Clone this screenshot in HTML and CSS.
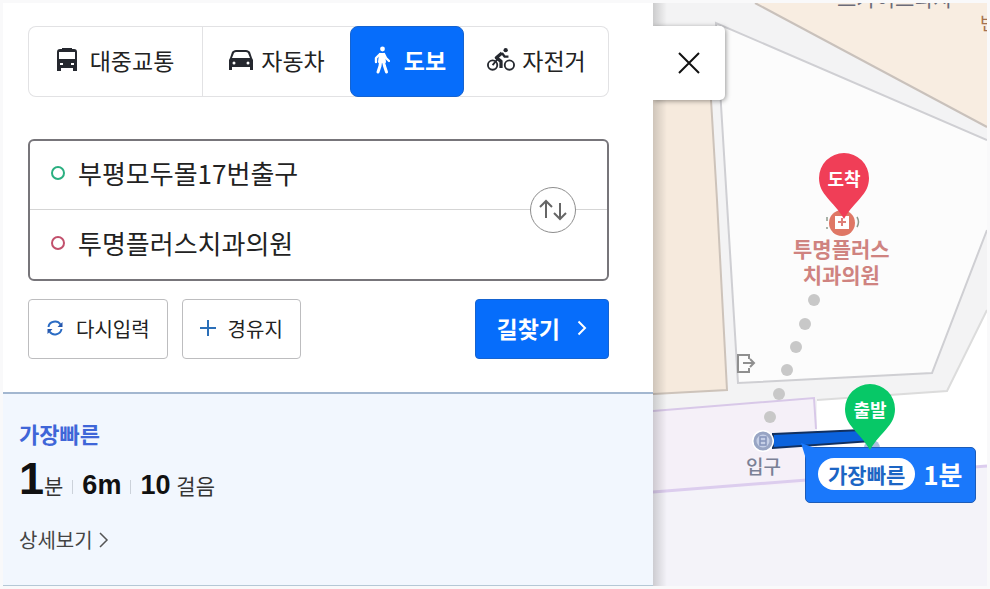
FILE: index.html
```html
<!DOCTYPE html>
<html lang="ko">
<head>
    <meta charset="UTF-8">
    <meta name="viewport" content="width=device-width, initial-scale=1.0">
    <title>길찾기</title>
    <link rel="stylesheet" href="styles.css">
</head>
<body>
    <div class="app">
        <main class="panel">
            <form class="search">
                <!-- Travel mode -->
                <div class="tabs">
                    <button type="button" class="tab">
                        <svg width="22" height="24" viewBox="0 0 22 24">
                            <path d="M6 0h10v1h2c2 0 3 1 3 3v19h-4v-3H5v3H1V4c0-2 1-3 3-3h2z" fill="#25282f"/>
                            <path d="M3 4h16v7H3z" fill="#fff"/>
                            <path d="M4 15h3v2H4zM15 15h3v2h-3z" fill="#fff"/>
                        </svg>
                        대중교통
                    </button>
                    <button type="button" class="tab">
                        <svg width="26" height="22" viewBox="0 0 26 22">
                            <path d="M8 1h10c2 0 3 1 4 2l2 6 1 2v10h-3v-3H4v3H1V11l1-2 2-6c1-1 2-2 4-2z" fill="#25282f"/>
                            <path d="M8 3h10c1 0 2 1 2 1l2 5H4l2-5s1-1 2-1z" fill="#fff"/>
                            <circle cx="6" cy="14" r="1.5" fill="#fff"/>
                            <circle cx="20" cy="14" r="1.5" fill="#fff"/>
                        </svg>
                        자동차
                    </button>
                    <button type="button" class="tab active">
                        <svg width="16" height="28" viewBox="0 0 16 28" fill="none" stroke="#fff" stroke-linecap="round" stroke-linejoin="round">
                            <circle cx="8.5" cy="3" r="2.4" fill="#fff" stroke="none"/>
                            <path d="M6 8h4l1 8H5z" fill="#fff" stroke-width="2"/>
                            <path d="M6 8l-4 4v4M10 8l2 4 3 3" stroke-width="2.4"/>
                            <path d="M6.5 16L6 20l-2 6M9.5 16l1 4 2 6" stroke-width="3"/>
                        </svg>
                        도보
                    </button>
                    <button type="button" class="tab">
                        <svg width="28" height="25" viewBox="0 0 30 26" fill="none" stroke="#25282f" stroke-width="2">
                            <circle cx="6" cy="19" r="5"/>
                            <circle cx="24" cy="19" r="5"/>
                            <circle cx="20" cy="3" r="2.3" fill="#25282f" stroke="none"/>
                            <path d="M16 6l-6 5 5 4v7" stroke-width="3.5" stroke-linejoin="round"/>
                            <path d="M16 6l3 4h4" stroke-width="2.5" stroke-linejoin="round"/>
                            <path d="M6 19l5-6"/>
                        </svg>
                        자전거
                    </button>
                </div>

                <!-- Start and goal -->
                <div class="route">
                    <label class="stop start">
                        <span class="ring"></span>
                        <input type="text" value="부평모두몰17번출구" aria-label="출발지">
                    </label>
                    <label class="stop goal">
                        <span class="ring"></span>
                        <input type="text" value="투명플러스치과의원" aria-label="도착지">
                    </label>
                    <button type="button" class="swap" aria-label="출발지 도착지 바꾸기">
                        <svg width="28" height="22" viewBox="0 0 28 22" fill="none" stroke="#666" stroke-width="2">
                            <path d="M7 19V2M1 8l6-6 6 6M21 4v16M15 14l6 6 6-6"/>
                        </svg>
                    </button>
                </div>

                <div class="actions">
                    <button type="reset" class="btn">
                        <svg width="18" height="16" viewBox="0 0 18 16" fill="none" stroke="#2b6cc4" stroke-width="2">
                            <path d="M2.5 7A6.5 6 0 0 1 14.5 4.5M15.5 9A6.5 6 0 0 1 3.5 11.5"/>
                            <path d="M16.5 2v5h-5zM1.5 14V9h5z" fill="#2456ad" stroke="none"/>
                        </svg>
                        다시입력
                    </button>
                    <button type="button" class="btn">
                        <svg width="16" height="16" viewBox="0 0 16 16" stroke="#2b6fb8" stroke-width="2">
                            <path d="M8 0v16M0 8h16"/>
                        </svg>
                        경유지
                    </button>
                    <button type="submit" class="btn primary">
                        길찾기
                        <svg width="10" height="16" viewBox="0 0 10 16" fill="none" stroke="#fff" stroke-width="2">
                            <path d="M1.5 1.5L8 8l-6.5 6.5"/>
                        </svg>
                    </button>
                </div>
            </form>

            <!-- Result -->
            <section class="result">
                <h2>가장빠른</h2>
                <p class="summary">
                    <span><b class="time">1</b>분</span>
                    <span><b>6m</b></span>
                    <span><b>10</b> 걸음</span>
                </p>
                <a href="#" class="detail">
                    상세보기
                    <svg width="10" height="16" viewBox="0 0 10 16" fill="none" stroke="#555" stroke-width="1.5">
                        <path d="M1 1l7 7-7 7"/>
                    </svg>
                </a>
            </section>
        </main>

        <div class="map">
            <svg class="ground" width="100%" height="100%">
                <!-- blocks -->
                <path d="M102 0L334 124V0z" fill="#f8ede1"/>
                <path d="M102 0L334 124" stroke="#c9c1bb" stroke-width="2"/>
                <path d="M334 137V227L279 370L85 380L63 20z" fill="#fcfcfc"/>
                <path d="M334 227L279 370L85 380L63 20L334 137" fill="none" stroke="#cfcfd3" stroke-width="2"/>
                <path d="M-2 80H57L64 197L74 387L-2 391z" fill="#f6eadd" stroke="#cdc3ba" stroke-width="2"/>
                <path d="M334 307L294 388L164 397V480L334 463z" fill="#fff"/>
                <path d="M334 307L294 388L164 397" fill="none" stroke="#dcdcdc" stroke-width="2"/>
                <!-- underground mall -->
                <path d="M0 408L161 395L166 476L334 463V583H0z" fill="#f4f3f9"/>
                <path d="M0 408L161 395L163 480L0 489z" fill="#f5f0f8"/>
                <path d="M0 408L161 395L163 426" fill="none" stroke="#d8c8e8" stroke-width="2"/>
                <path d="M0 489L334 463" stroke="#dccdee" stroke-width="3"/>
                <!-- walking route -->
                <g fill="#c8c8c8">
                    <circle cx="161" cy="297" r="6"/>
                    <circle cx="152" cy="321" r="6"/>
                    <circle cx="143" cy="344" r="6"/>
                    <circle cx="134" cy="367" r="6"/>
                    <circle cx="126" cy="391" r="6"/>
                    <circle cx="117" cy="414" r="6"/>
                </g>
                <circle cx="219" cy="445" r="8" fill="#a9bfdd"/>
                <path d="M120 431L209 427L220 438L120 445z" fill="#0b62dc" stroke="#12305f" stroke-width="2"/>
                <!-- mall entrance -->
                <circle cx="110" cy="438" r="11" fill="#fff"/>
                <circle cx="110" cy="438" r="8" fill="#c5cfe6" stroke="#98a5c4" stroke-width="3"/>
                <path d="M107 434h6v8h-6zM107 438h6" fill="none" stroke="#8494ba" stroke-width="1.5"/>
                <!-- exit -->
                <path d="M96 356v-4H85v17h11v-4M90 360h11M97 356l4 4-4 4" fill="none" stroke="#8f8f8f" stroke-width="2"/>
                <!-- clinic -->
                <circle cx="189" cy="220" r="13" fill="#df7765"/>
                <path d="M182 213h14v13h-14z" fill="#fff"/>
                <path d="M189 215v8M185 219h8" stroke="#df7f78" stroke-width="2"/>
                <path d="M174 214v4M174 224v2M204 214q3 5 0 10" fill="none" stroke="#8d9a8d" stroke-width="1.5"/>
            </svg>

            <span class="place mart">스카이프라자</span>
            <span class="place shop">번</span>
            <span class="place clinic">투명플러스<br>치과의원</span>
            <span class="place gate">입구</span>

            <div class="pin arrive">
                <svg width="50" height="66" viewBox="0 0 50 66"><path d="M25 0A25 25 0 0 1 50 25C50 42 36 47 25 66C14 47 0 42 0 25A25 25 0 0 1 25 0z"/></svg>
                <span>도착</span>
            </div>

            <div class="bubble">
                <svg class="tail" width="14" height="22" viewBox="0 0 14 22"><path d="M0 0L14 5V22L5 16z"/></svg>
                <em>가장빠른</em>
                <strong>1분</strong>
            </div>

            <div class="pin depart">
                <svg width="50" height="66" viewBox="0 0 50 66"><path d="M25 0A25 25 0 0 1 50 25C50 42 36 47 25 66C14 47 0 42 0 25A25 25 0 0 1 25 0z"/></svg>
                <span>출발</span>
            </div>

            <button type="button" class="close" aria-label="닫기">
                <svg width="22" height="22" viewBox="0 0 22 22" stroke="#111" stroke-width="2">
                    <path d="M1 1l20 20M21 1L1 21"/>
                </svg>
            </button>
        </div>
    </div>
</body>
</html>
```
FILE: styles.css
```css
* {
    margin: 0;
    padding: 0;
    box-sizing: border-box;
}

body {
    padding: 3px;
    background-color: #f9f9fa;
    color: #222;
    font-family: "Noto Sans CJK KR", sans-serif;
}

button,
input {
    font: inherit;
    color: inherit;
    background: none;
    border: none;
}

button {
    cursor: pointer;
}

svg {
    flex: none;
}

.app {
    display: flex;
    min-height: calc(100vh - 6px);
    background-color: #fff;
}

.panel {
    flex: 0 1 650px;
    display: flex;
    flex-direction: column;
}

.search {
    padding: 23px 44px 33px 25px;
}

/* Travel mode */
.tabs {
    display: grid;
    grid-template-columns: 175fr 147fr 114fr 145fr;
    height: 71px;
    margin-bottom: 42px;
    border-radius: 8px;
    box-shadow: inset 0 0 0 1px #e2e2e4;
}

.tab {
    display: flex;
    justify-content: center;
    align-items: center;
    gap: 7px;
    padding-bottom: 4px;
    font-size: 23px;
    line-height: 32px;
}

.tab:first-child {
    gap: 12px;
    border-right: 1px solid #e2e2e4;
}

.tab.active {
    gap: 14px;
    padding-left: 6px;
    background-color: #066dfb;
    border: 1px solid #1563d0;
    border-radius: 8px;
    color: #fff;
    font-weight: 700;
}

/* Start and goal */
.route {
    position: relative;
    margin-bottom: 18px;
    border: 2px solid #77757a;
    border-radius: 6px;
}

.stop {
    display: flex;
    align-items: center;
    gap: 13px;
    height: 69px;
    padding: 0 80px 4px 21px;
}

.stop.start {
    border-bottom: 1px solid #d5d5d5;
}

.ring {
    flex: none;
    width: 14px;
    height: 14px;
    border: 2px solid #2aaf80;
    border-radius: 50%;
}

.goal .ring {
    border-color: #c2506c;
}

.stop input {
    flex: 1;
    min-width: 0;
    font-size: 26px;
    line-height: 40px;
    outline: none;
}

.swap {
    position: absolute;
    top: 50%;
    right: 31px;
    display: flex;
    justify-content: center;
    align-items: center;
    width: 46px;
    height: 46px;
    transform: translateY(-50%);
    background-color: #fff;
    border: 1px solid #8d8d8d;
    border-radius: 50%;
}

.actions {
    display: flex;
    gap: 14px;
}

.btn {
    display: flex;
    align-items: center;
    gap: 12px;
    height: 60px;
    padding: 0 17px 2px;
    border: 1px solid #bdbdbf;
    border-radius: 4px;
    font-size: 20px;
}

.btn.primary {
    gap: 17px;
    margin-left: auto;
    padding: 0 21px 2px;
    background-color: #066dfb;
    border-color: #1563d0;
    color: #fff;
    font-size: 23px;
    font-weight: 700;
}

/* Result */
.result {
    flex: 1;
    padding: 23px 16px;
    background-color: #f2f7fe;
    border-top: 2px solid #a3b7d0;
    border-bottom: 1px solid #b5c8d6;
}

.result h2 {
    color: #3f66d8;
    font-size: 22px;
    font-weight: 700;
    line-height: 32px;
}

.summary {
    display: flex;
    align-items: baseline;
    color: #333;
    font-size: 21px;
    line-height: 60px;
}

.summary span + span::before {
    content: "";
    display: inline-block;
    width: 1px;
    height: 14px;
    margin: 0 9px;
    background-color: #ccd2da;
}

.summary b {
    color: #111;
    font-family: "Liberation Sans", sans-serif;
    font-size: 27px;
}

.summary .time {
    font-size: 45px;
}

.detail {
    display: inline-flex;
    align-items: center;
    gap: 6px;
    margin-top: 10px;
    color: #444;
    font-size: 20px;
    line-height: 30px;
    text-decoration: none;
}

/* Map */
.map {
    position: relative;
    flex: 1;
    overflow: hidden;
    background-color: #f3f3f4;
}

.map::after {
    content: "";
    position: absolute;
    inset: 0 auto 0 0;
    width: 14px;
    background: linear-gradient(to right, rgba(0, 0, 0, 0.16), rgba(0, 0, 0, 0));
}

.ground {
    position: absolute;
    inset: 0;
}

.place {
    position: absolute;
    line-height: 26px;
    text-align: center;
    white-space: nowrap;
}

.mart {
    top: -19px;
    left: 184px;
    color: #6b6b78;
    font-size: 21px;
}

.shop {
    top: 6px;
    left: 327px;
    color: #a5714e;
    font-size: 18px;
}

.clinic {
    top: 232px;
    left: 140px;
    color: #cf8380;
    font-size: 21px;
    font-weight: 700;
}

.gate {
    top: 450px;
    left: 93px;
    color: #7b8096;
    font-size: 19px;
    font-weight: 500;
}

.pin {
    position: absolute;
    width: 50px;
}

.pin svg {
    display: block;
}

.pin span {
    position: absolute;
    top: 12px;
    left: 0;
    width: 100%;
    color: #fff;
    font-size: 18px;
    font-weight: 700;
    line-height: 26px;
    text-align: center;
}

.arrive {
    top: 150px;
    left: 166px;
    fill: #f03e57;
}

.depart {
    top: 381px;
    left: 192px;
    fill: #07c867;
}

.bubble {
    position: absolute;
    top: 444px;
    left: 152px;
    display: flex;
    align-items: center;
    gap: 8px;
    height: 56px;
    padding: 0 12px 2px;
    background-color: #1a78fb;
    border: 1px solid #1d5cb8;
    border-radius: 5px;
    color: #fff;
    white-space: nowrap;
}

.bubble em {
    padding: 0 10px;
    background-color: #fff;
    border-radius: 16px;
    color: #1c65c4;
    font-size: 21px;
    font-style: normal;
    font-weight: 700;
    line-height: 32px;
}

.bubble strong {
    font-size: 26px;
    line-height: 32px;
}

.tail {
    position: absolute;
    top: -5px;
    left: -5px;
    fill: #1a78fb;
}

.close {
    position: absolute;
    z-index: 1;
    top: 23px;
    left: 0;
    display: flex;
    justify-content: center;
    align-items: center;
    width: 72px;
    height: 74px;
    background-color: #fff;
    border-radius: 0 5px 5px 0;
    box-shadow: 1px 1px 5px rgba(0, 0, 0, 0.4);
}
```
